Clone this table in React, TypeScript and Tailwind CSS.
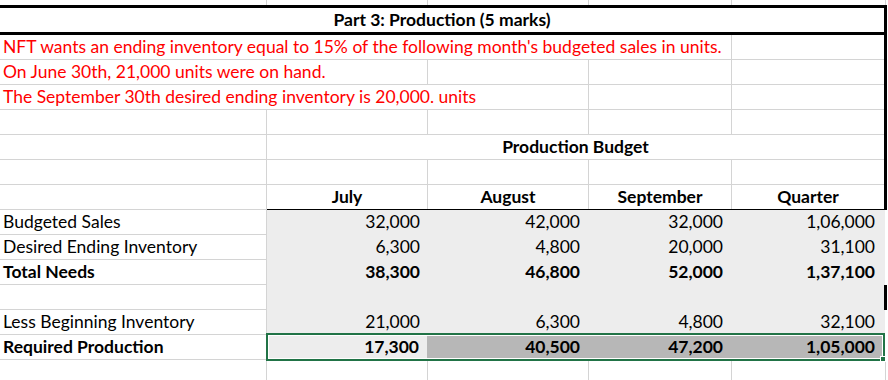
import type { ReactNode } from "react";

// column widths incl. the right gridline pixel: A | B | C | D | E
const grid = "border-[#d4d4d4]";
const fill = "bg-[#ededed]";

type Cell = { w: string; children?: ReactNode; className?: string };

function Row({ cells, className = "" }: { cells: Cell[]; className?: string }) {
  return (
    <div className={`flex h-[25px] ${className}`}>
      {cells.map((c, i) => (
        <div key={i} className={`h-full shrink-0 leading-[24px] whitespace-nowrap ${c.w} ${c.className ?? ""}`}>
          {c.children}
        </div>
      ))}
    </div>
  );
}

const cell = `border-r border-b ${grid}`;
const lastCell = `border-b ${grid}`;

const months = ["July", "August", "September", "Quarter"];

const data = [
  { label: "Budgeted Sales", vals: ["32,000", "42,000", "32,000", "1,06,000"] },
  { label: "Desired Ending Inventory", vals: ["6,300", "4,800", "20,000", "31,100"] },
  { label: "Total Needs", vals: ["38,300", "46,800", "52,000", "1,37,100"], bold: true },
  { label: "", vals: ["", "", "", ""], gap: true },
  { label: "Less Beginning Inventory", vals: ["21,000", "6,300", "4,800", "32,100"] },
];

const dataW = ["w-[161px]", "w-[161px]", "w-[143px]", "w-[154px]"];

export default function App() {
  return (
    <div className="w-[888px] h-[380px] overflow-hidden bg-white text-[17.5px] text-black font-['Lato',sans-serif]">
      {/* strip of the row above */}
      <div className="flex h-[5px]">
        <div className={`w-[267px] border-r ${grid}`} />
        <div className={`w-[161px] border-r ${grid}`} />
        <div className={`w-[161px] border-r ${grid}`} />
        <div className={`w-[143px] border-r ${grid}`} />
        <div className={`w-[154px] border-r ${grid}`} />
      </div>

      {/* outlined block: title, notes, header */}
      <div className="w-[887px] border-t-[3px] border-r-[3px] border-black">
        <div className="h-[27px] border-b-[3px] border-black text-center font-bold leading-[24px]">
          Part 3: Production (5 marks)
        </div>
        <div className="text-[#ff0000]">
          <Row
            cells={[
              { w: "w-[732px]", className: `${cell} pl-[3px]`, children: "NFT wants an ending inventory equal to 15% of the following month's budgeted sales in units." },
              { w: "w-[152px]", className: lastCell },
            ]}
          />
          <Row
            cells={[
              { w: "w-[428px]", className: `${cell} pl-[3px]`, children: "On June 30th, 21,000 units were on hand." },
              { w: "w-[161px]", className: cell },
              { w: "w-[143px]", className: cell },
              { w: "w-[152px]", className: lastCell },
            ]}
          />
          <Row
            cells={[
              { w: "w-[589px]", className: `${cell} pl-[3px]`, children: "The September 30th desired ending inventory is 20,000. units" },
              { w: "w-[143px]", className: cell },
              { w: "w-[152px]", className: lastCell },
            ]}
          />
        </div>
        <Row
          cells={[
            { w: "w-[267px]", className: cell },
            { w: "w-[161px]", className: cell },
            { w: "w-[161px]", className: cell },
            { w: "w-[143px]", className: cell },
            { w: "w-[152px]", className: lastCell },
          ]}
        />
        <Row
          cells={[
            { w: "w-[267px]", className: cell },
            { w: "w-[617px]", className: `${lastCell} text-center font-bold`, children: "Production Budget" },
          ]}
        />
        <Row
          cells={[
            { w: "w-[267px]", className: cell },
            { w: "w-[161px]", className: cell },
            { w: "w-[161px]", className: cell },
            { w: "w-[143px]", className: cell },
            { w: "w-[152px]", className: lastCell },
          ]}
        />
        <div className="flex h-[25px] leading-[24px] font-bold">
          <div className={`w-[267px] ${cell}`} />
          <div className="flex flex-1 border-b border-black">
            <div className={`w-[161px] border-r ${grid} text-center`}>{months[0]}</div>
            <div className={`w-[161px] border-r ${grid} text-center`}>{months[1]}</div>
            <div className={`w-[143px] border-r ${grid} text-center`}>{months[2]}</div>
            <div className="w-[152px] text-center">{months[3]}</div>
          </div>
        </div>
      </div>

      {/* shaded figures */}
      {data.map((r, i) => (
        <div key={i} className={`flex h-[25px] leading-[24px] ${r.bold ? "font-bold" : ""}`}>
          <div className={`w-[267px] shrink-0 pl-[3px] border-r border-b ${grid}`}>{r.label}</div>
          {r.vals.map((v, j) => (
            <div
              key={j}
              className={`${dataW[j]} shrink-0 ${fill} text-right ${j === 3 ? "pr-[10px]" : j === 0 ? "pr-[8px]" : "pr-[9px]"} ${
                j === 3 ? (r.gap ? "w-[155px] border-r-[3px] border-black" : `border-r border-r-white`) : ""
              }`}
            >
              {v}
            </div>
          ))}
        </div>
      ))}

      {/* required production, selected */}
      <div className="flex h-[25px] leading-[24px] font-bold">
        <div className={`w-[267px] shrink-0 pl-[3px] border-r border-b ${grid}`}>Required Production</div>
        <div className="relative flex">
          <div className={`w-[161px] ${fill} text-right pr-[8px] border-r border-[#b7b7b7]`}>17,300</div>
          <div className="w-[161px] bg-[#b7b7b7] text-right pr-[9px]">40,500</div>
          <div className="w-[143px] bg-[#b7b7b7] text-right pr-[9px]">47,200</div>
          <div className="w-[154px] bg-[#b7b7b7] text-right pr-[10px] border-r border-white">1,05,000</div>
          <div className="absolute -top-[2px] -bottom-[1px] -left-[1px] right-[1px] border-2 border-[#217346] shadow-[inset_0_0_0_1px_#ffffff]">
            <div className="absolute -right-[3px] -bottom-[3px] w-[6px] h-[6px] bg-[#217346] border border-white" />
          </div>
        </div>
      </div>

      <div className="flex h-[25px]">
        <div className={`w-[267px] border-r ${grid}`} />
        <div className={`w-[161px] border-r ${grid}`} />
        <div className={`w-[161px] border-r ${grid}`} />
        <div className={`w-[143px] border-r ${grid}`} />
        <div className={`w-[154px] border-r ${grid}`} />
      </div>
    </div>
  );
}
